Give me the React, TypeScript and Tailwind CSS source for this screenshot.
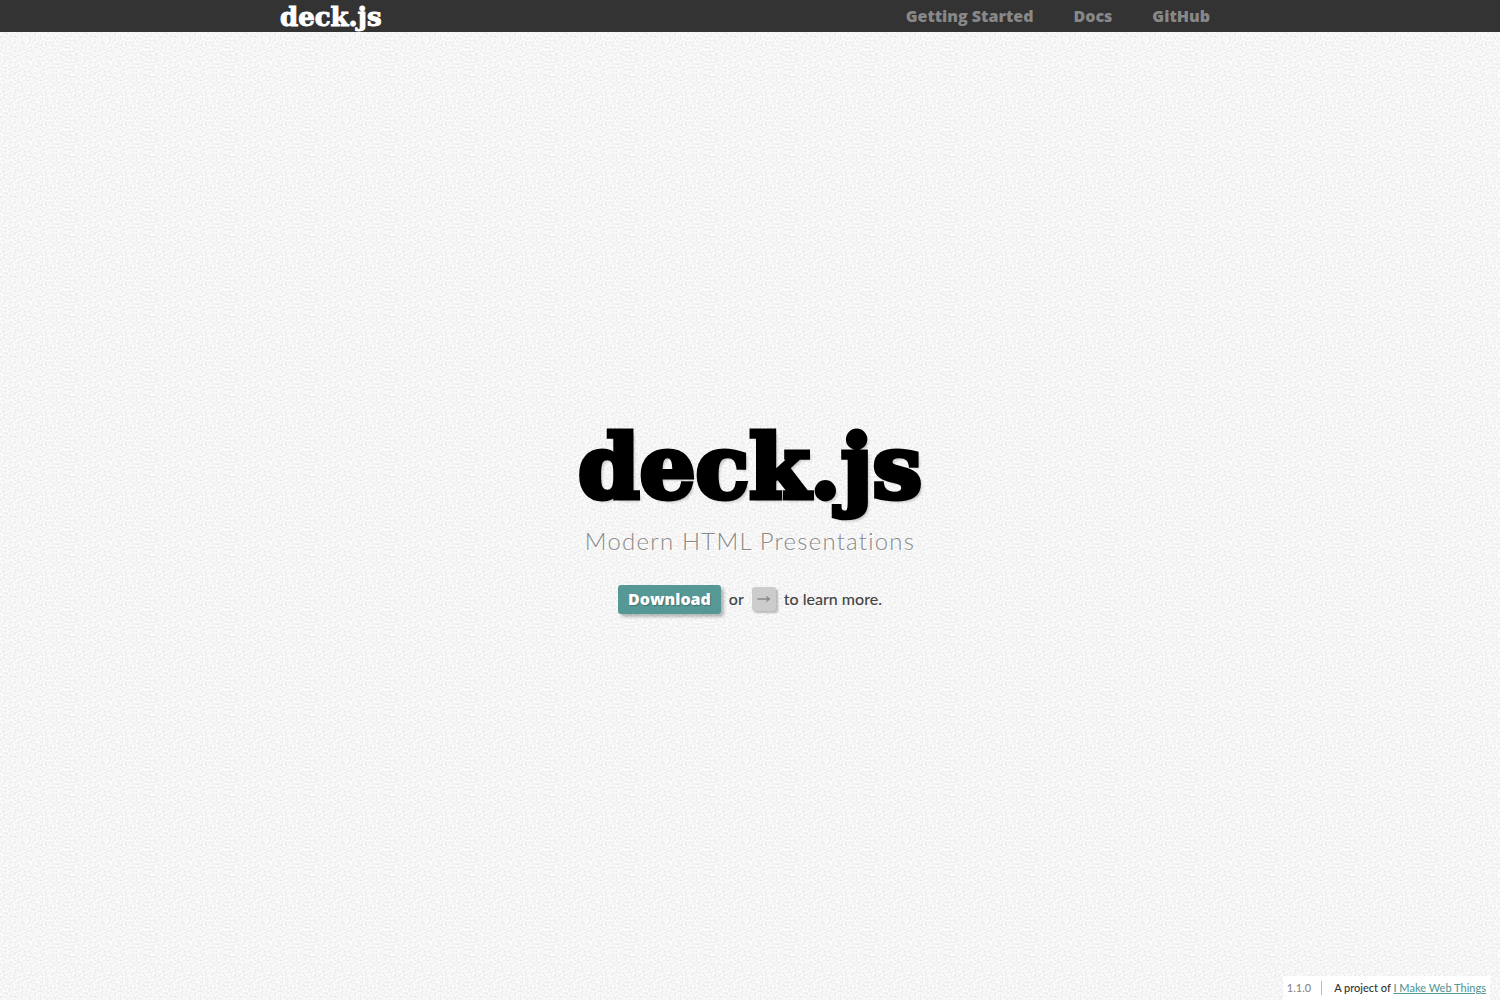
const navLinks = [
  { label: "Getting Started", href: "#getting-started" },
  { label: "Docs", href: "#docs" },
  { label: "GitHub", href: "#github" },
];

function PaperTexture() {
  return (
    <svg aria-hidden="true" className="pointer-events-none absolute inset-0 -z-10 h-full w-full">
      <defs>
        <filter id="grain" x="0" y="0" width="100%" height="100%" colorInterpolationFilters="sRGB">
          <feTurbulence type="fractalNoise" baseFrequency="0.55" numOctaves="3" seed="11" stitchTiles="stitch" />
          <feColorMatrix
            type="matrix"
            values="0.18 0 0 0 0.872  0.18 0 0 0 0.872  0.18 0 0 0 0.872  0 0 0 0 1"
          />
        </filter>
        <pattern id="paper" width="80" height="80" patternUnits="userSpaceOnUse">
          <rect width="80" height="80" filter="url(#grain)" />
        </pattern>
      </defs>
      <rect width="100%" height="100%" fill="url(#paper)" />
    </svg>
  );
}

function Header() {
  return (
    <header className="h-8 bg-[#333]">
      <div className="mx-auto flex h-full max-w-[940px] items-center justify-between pr-2.5">
        <a
          href="#home"
          className="pt-0.5 font-['DejaVu_Serif',serif] text-[26px] leading-8 font-bold text-white [-webkit-text-stroke:1px_white]"
        >
          deck.js
        </a>
        <nav className="flex gap-10 font-['Open_Sans',sans-serif] text-base leading-8 font-extrabold text-[#888]">
          {navLinks.map((link) => (
            <a key={link.label} href={link.href}>
              {link.label}
            </a>
          ))}
        </nav>
      </div>
    </header>
  );
}

function Hero() {
  return (
    <main className="flex flex-1 flex-col items-center justify-center pt-1 text-center">
      <h1 className="font-['DejaVu_Serif',serif] text-[88px] leading-[88px] font-bold text-black [-webkit-text-stroke:5px_black] [text-shadow:3px_3px_3px_rgba(0,0,0,0.25)]">
        deck.js
      </h1>
      <h2 className="mt-3.5 text-2xl leading-8 font-light tracking-wider text-[#888] [text-shadow:1px_1px_0_white]">
        Modern HTML Presentations
      </h2>
      <p className="mt-7 flex items-center text-base leading-6 font-medium text-[#444]">
        <a
          href="#download"
          className="rounded-[3px] bg-[#569896] px-2.5 font-['Open_Sans',sans-serif] text-base leading-[29px] font-extrabold text-white shadow-[3px_3px_3px_rgba(0,0,0,0.25)] [text-shadow:1px_1px_1px_rgba(0,0,0,0.25)]"
        >
          Download
        </a>
        <span className="mx-2">or</span>
        <kbd className="mr-2 flex h-6 w-6 items-center justify-center rounded-[3px] bg-[#ccc] text-[#888] shadow-[2px_2px_2px_rgba(0,0,0,0.25)]">
          <svg role="img" aria-label="right arrow" viewBox="0 0 14 8" className="h-2 w-3.5 fill-none stroke-current">
            <path d="M0.5 4H12" strokeWidth="1.5" />
            <path d="M9 0.5L13.5 4L9 7.5L10.2 4Z" className="fill-current stroke-none" />
          </svg>
        </kbd>
        <span>to learn more.</span>
      </p>
    </main>
  );
}

function Footer() {
  return (
    <footer className="absolute right-2.5 bottom-0 flex h-6 items-center bg-white px-1 text-[11px] font-medium text-[#333]">
      <span className="mr-3 border-r border-[#bbb] pr-2.5 leading-[14px] text-[#888]">1.1.0</span>
      <span>
        A project of{" "}
        <a href="#webthings" className="text-[#569896] underline">
          I Make Web Things
        </a>
      </span>
    </footer>
  );
}

export default function App() {
  return (
    <div className="relative isolate flex min-h-screen flex-col font-['Lato',sans-serif]">
      <PaperTexture />
      <Header />
      <Hero />
      <Footer />
    </div>
  );
}
